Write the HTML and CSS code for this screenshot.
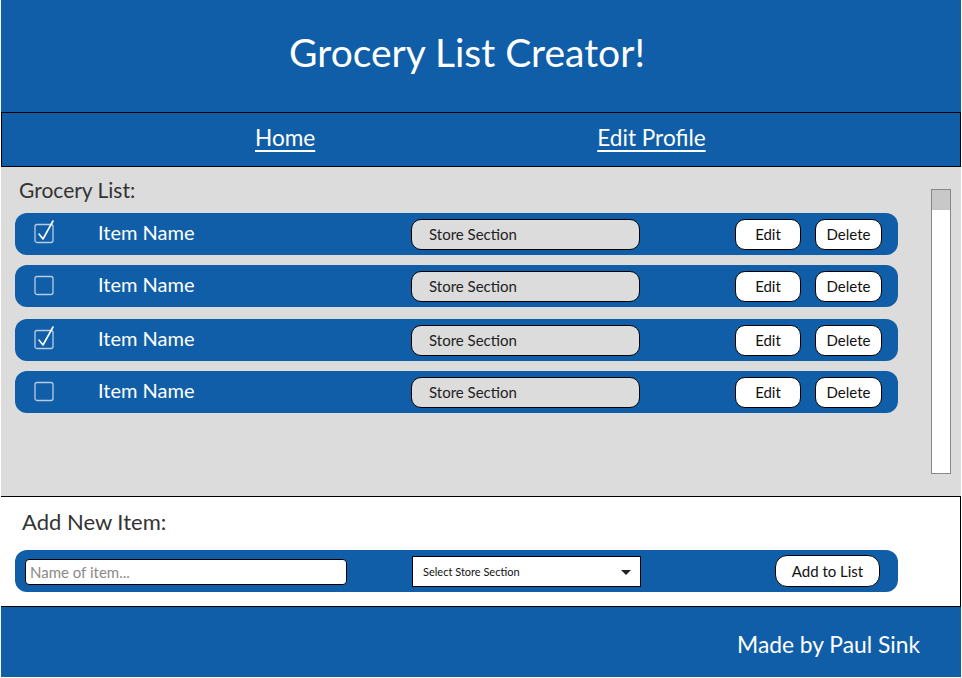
FILE: index.html
```html
<!DOCTYPE html>
<html lang="en">
<head>
<meta charset="utf-8">
<title>Grocery List Creator!</title>
<link rel="stylesheet" href="styles.css">
</head>
<body>
<div class="app">
  <header class="header"><h1 class="title">Grocery List Creator!</h1></header>
  <nav class="nav">
    <a class="nav-link" href="#">Home</a>
    <a class="nav-link" href="#">Edit Profile</a>
  </nav>
  <section class="list-section">
    <div class="list-col">
      <h2 class="section-title">Grocery List:</h2>
      <div class="rows">
        <div class="row">
          <span class="check"><svg width="24" height="26" viewBox="0 0 24 26"><rect x="1" y="5.5" width="18" height="18" rx="2" fill="none" stroke="#b8cce3" stroke-width="1.3"/><path d="M5 15 L9 20 L19 2" fill="none" stroke="#fff" stroke-width="1.6" stroke-linecap="round" stroke-linejoin="round"/></svg></span>
          <span class="item-name">Item Name</span>
          <span class="section-pill">Store Section</span>
          <span class="actions"><button class="btn btn-edit">Edit</button><button class="btn btn-del">Delete</button></span>
        </div>
        <div class="row">
          <span class="check"><svg width="24" height="26" viewBox="0 0 24 26"><rect x="1" y="5.5" width="18" height="18" rx="2" fill="none" stroke="#b8cce3" stroke-width="1.3"/></svg></span>
          <span class="item-name">Item Name</span>
          <span class="section-pill">Store Section</span>
          <span class="actions"><button class="btn btn-edit">Edit</button><button class="btn btn-del">Delete</button></span>
        </div>
        <div class="row row-gap">
          <span class="check"><svg width="24" height="26" viewBox="0 0 24 26"><rect x="1" y="5.5" width="18" height="18" rx="2" fill="none" stroke="#b8cce3" stroke-width="1.3"/><path d="M5 15 L9 20 L19 2" fill="none" stroke="#fff" stroke-width="1.6" stroke-linecap="round" stroke-linejoin="round"/></svg></span>
          <span class="item-name">Item Name</span>
          <span class="section-pill">Store Section</span>
          <span class="actions"><button class="btn btn-edit">Edit</button><button class="btn btn-del">Delete</button></span>
        </div>
        <div class="row">
          <span class="check"><svg width="24" height="26" viewBox="0 0 24 26"><rect x="1" y="5.5" width="18" height="18" rx="2" fill="none" stroke="#b8cce3" stroke-width="1.3"/></svg></span>
          <span class="item-name">Item Name</span>
          <span class="section-pill">Store Section</span>
          <span class="actions"><button class="btn btn-edit">Edit</button><button class="btn btn-del">Delete</button></span>
        </div>
      </div>
    </div>
    <div class="scrollbar"><div class="thumb"></div></div>
  </section>
  <section class="add-section">
    <h2 class="section-title add-title">Add New Item:</h2>
    <div class="add-row">
      <input class="name-input" type="text" placeholder="Name of item...">
      <div class="select"><span>Select Store Section</span><span class="caret"></span></div>
      <button class="btn btn-add">Add to List</button>
    </div>
  </section>
  <footer class="footer">Made by Paul Sink</footer>
</div>
</body>
</html>
```
FILE: styles.css
```css
* { box-sizing: border-box; }
html, body { margin: 0; padding: 0; background: #fff; }
body { font-family: Lato, "Open Sans", "Liberation Sans", sans-serif; }
.app { width: 960px; margin-left: 1px; }
.header {
  height: 112px;
  background: #105ea8;
  display: flex;
  align-items: center;
  justify-content: center;
}
.title {
  margin: 0;
  color: #fff;
  font-weight: 400;
  font-size: 39px;
  line-height: 1;
  padding-bottom: 8px;
  padding-right: 28px;
}
.nav {
  height: 55px;
  background: #105ea8;
  border: 1px solid #000;
  display: flex;
  align-items: center;
  padding-left: 253px;
  padding-bottom: 4px;
  gap: 282px;
}
.nav-link {
  color: #fff;
  font-size: 22.6px;
  text-decoration: underline;
  text-underline-offset: 4px;
  text-decoration-thickness: 2px;
}
.list-section {
  height: 330px;
  background: #dcdcdc;
  border-bottom: 1px solid #000;
  display: flex;
  padding-left: 14px;
}
.list-col { width: 883px; }
.section-title {
  margin: 0;
  font-weight: 400;
  font-size: 21px;
  color: #333;
  line-height: 30px;
}
.list-section .section-title { padding: 8px 0 0 4px; height: 46px; }
.rows { display: flex; flex-direction: column; gap: 10px; }
.row-gap { margin-top: 2px; }
.row {
  height: 42px;
  background: #105ea8;
  border-radius: 12px;
  display: flex;
  align-items: center;
  padding-left: 19px;
}
.check { width: 24px; height: 26px; display: block; margin-top: -5px; }
.check svg { display: block; }
.item-name {
  color: #fff;
  font-size: 20px;
  margin-left: 40px;
  width: 313px;
  padding-bottom: 4px;
}
.section-pill {
  width: 229px;
  height: 31px;
  background: #dcdcdc;
  border: 1px solid #000;
  border-radius: 10px;
  font-size: 15px;
  color: #222;
  display: flex;
  align-items: center;
  padding-left: 17px;
}
.actions { display: flex; gap: 14px; margin-left: 95px; }
.btn {
  font-family: inherit;
  background: #fff;
  border: 1px solid #000;
  border-radius: 10px;
  font-size: 15px;
  color: #111;
  height: 31px;
  padding: 0;
  cursor: pointer;
}
.btn-edit { width: 66px; }
.btn-del { width: 67px; }
.scrollbar {
  margin-left: 33px;
  margin-top: 22px;
  width: 20px;
  height: 285px;
  background: #fff;
  border: 1px solid #888;
}
.thumb { height: 20px; background: #c8c8c8; }
.add-section {
  height: 110px;
  background: #fff;
  border-right: 1px solid #000;
  border-bottom: 1px solid #000;
  padding: 10px 0 0 14px;
}
.add-title { padding-left: 7px; height: 43px; font-size: 22px; }
.add-row {
  width: 883px;
  height: 42px;
  background: #105ea8;
  border-radius: 12px;
  display: flex;
  align-items: center;
  padding-left: 10px;
}
.name-input {
  width: 322px;
  height: 26px;
  border: 1px solid #000;
  border-radius: 4px;
  background: #fff;
  font-family: inherit;
  font-size: 15px;
  padding: 0 4px;
  margin-top: 1px;
}
.name-input::placeholder { color: #8a8a8a; }
.select {
  width: 229px;
  height: 31px;
  margin-left: 65px;
  background: #fff;
  border: 1px solid #000;
  display: flex;
  align-items: center;
  justify-content: space-between;
  padding: 0 9px 0 10px;
  font-size: 11px;
  color: #111;
}
.caret {
  width: 0; height: 0;
  border-left: 5.5px solid transparent;
  border-right: 5.5px solid transparent;
  border-top: 5px solid #222;
  margin-top: 3px;
}
.btn-add { width: 105px; height: 32px; margin-left: 134px; font-size: 15px; border-radius: 12px; }
.footer {
  height: 70px;
  background: #105ea8;
  color: #fff;
  font-size: 22.8px;
  display: flex;
  align-items: center;
  justify-content: flex-end;
  padding-right: 41px;
  padding-top: 4px;
}
```
